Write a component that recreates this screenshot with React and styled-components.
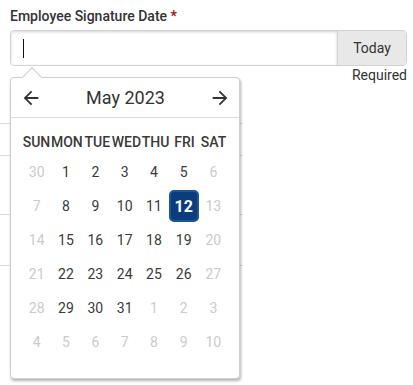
import React from "react";
import styled, { createGlobalStyle } from "styled-components";
import { MdArrowBack, MdArrowForward } from "react-icons/md";

const GlobalStyle = createGlobalStyle`
  html, body { margin: 0; padding: 0; background: #fff; }
  body { font-family: Roboto, "Liberation Sans", Arial, sans-serif; color: #333; }
  * { box-sizing: border-box; }
`;

const Page = styled.div`
  position: relative;
  width: 413px;
  height: 385px;
  overflow: hidden;
`;

const Field = styled.div`
  padding: 8px 6px 0 10px;
`;

const Label = styled.div`
  font-size: 14px;
  line-height: 16px;
  font-weight: 500;
  color: #333;
  margin-bottom: 6px;
`;

const Star = styled.span`
  color: #a3121a;
  font-weight: 700;
`;

const InputGroup = styled.div`
  display: flex;
  height: 36px;
  border: 1px solid #d2d2d2;
  border-radius: 4px;
  overflow: hidden;
`;

const InputBox = styled.div`
  flex: 1;
  display: flex;
  align-items: center;
  padding-left: 12px;
  background: #fff;
  box-shadow: inset 0 1px 3px rgba(0, 0, 0, 0.18);
`;

const Caret = styled.span`
  display: block;
  width: 1px;
  height: 19px;
  background: #111;
`;

const AddonButton = styled.div`
  width: 69px;
  display: flex;
  align-items: center;
  justify-content: center;
  background: #e8e8e8;
  border-left: 1px solid #d2d2d2;
  font-size: 14px;
  color: #333;
`;

const Hint = styled.div`
  text-align: right;
  font-size: 14px;
  line-height: 16px;
  padding-top: 1px;
  color: #333;
`;

const BgTable = styled.div`
  width: 243px;
`;

const BgRow = styled.div`
  height: ${(p) => p.$h}px;
  border-bottom: 1px solid #dcdcdc;
`;

const Popup = styled.div`
  position: absolute;
  left: 10px;
  top: 77px;
  width: 230px;
  height: 302px;
  background: #fff;
  border: 1px solid #cfcfcf;
  border-radius: 4px;
  box-shadow: 1px 2px 3px rgba(0, 0, 0, 0.3);
`;

const PopArrow = styled.div`
  position: absolute;
  left: 14px;
  top: -8px;
  width: 14px;
  height: 14px;
  background: #fff;
  border-top: 1px solid #cfcfcf;
  border-left: 1px solid #cfcfcf;
  transform: rotate(45deg);
`;

const Header = styled.div`
  position: relative;
  height: 40px;
  display: flex;
  align-items: center;
  justify-content: space-between;
  padding: 0 8px 0 9px;
  border-bottom: 1px solid #dedede;
`;

const NavButton = styled.div`
  width: 22px;
  height: 22px;
  display: flex;
  align-items: center;
  justify-content: center;
  color: #333;
`;

const Title = styled.div`
  font-size: 18px;
  color: #333;
  font-weight: 400;
`;

const Grid = styled.div`
  display: grid;
  grid-template-columns: repeat(7, 1fr);
  padding: 0 11px;
`;

const WeekRow = styled(Grid)`
  margin-top: 10px;
  height: 27px;
  align-items: center;
`;

const WeekDay = styled.div`
  text-align: center;
  font-size: 14px;
  font-weight: 500;
  color: #3a3a3a;
  white-space: nowrap;
`;

const DayCell = styled.div`
  height: 34px;
  display: flex;
  align-items: center;
  justify-content: center;
  font-size: 14px;
  color: ${(p) => (p.$muted ? "#cbcbcb" : "#3a3a3a")};
`;

const Selected = styled.div`
  width: 30px;
  height: 32px;
  display: flex;
  align-items: center;
  justify-content: center;
  background: #0b3d7b;
  border: 2px solid #1d5596;
  border-radius: 5px;
  color: #fff;
  font-weight: 700;
  font-size: 16px;
`;

const weekDays = ["SUN", "MON", "TUE", "WED", "THU", "FRI", "SAT"];

const days = [];
days.push({ d: 30, m: true });
for (let i = 1; i <= 31; i++) days.push({ d: i, m: false });
for (let i = 1; i <= 10; i++) days.push({ d: i, m: true });
days.forEach((x, i) => {
  const col = i % 7;
  if (col === 0 || col === 6) x.m = true;
});

export default function App() {
  return (
    <>
      <GlobalStyle />
      <Page>
        <Field>
          <Label>
            Employee Signature Date <Star>*</Star>
          </Label>
          <InputGroup>
            <InputBox>
              <Caret />
            </InputBox>
            <AddonButton>Today</AddonButton>
          </InputGroup>
          <Hint>Required</Hint>
        </Field>
        <BgTable>
          <BgRow $h={41} />
          <BgRow $h={32} />
          <BgRow $h={59} />
          <BgRow $h={51} />
        </BgTable>
        <Popup>
          <PopArrow />
          <Header>
            <NavButton>
              <MdArrowBack size={22} />
            </NavButton>
            <Title>May 2023</Title>
            <NavButton>
              <MdArrowForward size={22} />
            </NavButton>
          </Header>
          <WeekRow>
            {weekDays.map((w) => (
              <WeekDay key={w}>{w}</WeekDay>
            ))}
          </WeekRow>
          <Grid>
            {days.map((x, i) => (
              <DayCell key={i} $muted={x.m}>
                {!x.m && x.d === 12 ? <Selected>12</Selected> : x.d}
              </DayCell>
            ))}
          </Grid>
        </Popup>
      </Page>
    </>
  );
}
